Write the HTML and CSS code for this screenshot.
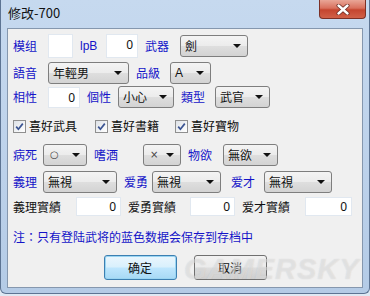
FILE: index.html
```html
<!DOCTYPE html>
<html lang="zh-TW">
<head>
    <meta charset="UTF-8">
    <title>修改-700</title>
    <link rel="stylesheet" href="styles.css">
</head>
<body>
    <div class="window">
        <div class="titlebar">
            <span class="title">修改-700</span>
            <div class="close-btn">
                <svg width="14" height="11" viewBox="0 0 14 11">
                    <path d="M2.5 1.5 L11.5 9.5 M11.5 1.5 L2.5 9.5" stroke="#6b2a22" stroke-width="4" stroke-linecap="round"/>
                    <path d="M2.5 1.5 L11.5 9.5 M11.5 1.5 L2.5 9.5" stroke="#fff" stroke-width="2.4" stroke-linecap="round"/>
                </svg>
            </div>
        </div>
        <div class="panel">
            <div class="row row-1">
                <span class="lbl">模组</span>
                <div class="edit"></div>
                <span class="lbl latin">lpB</span>
                <div class="edit">0</div>
                <span class="lbl">武器</span>
                <div class="combo"><span>劍</span><i class="arrow"></i></div>
            </div>
            <div class="row row-2">
                <span class="lbl">語音</span>
                <div class="combo"><span>年輕男</span><i class="arrow"></i></div>
                <span class="lbl">品級</span>
                <div class="combo"><span class="latin">A</span><i class="arrow"></i></div>
            </div>
            <div class="row row-3">
                <span class="lbl">相性</span>
                <div class="edit">0</div>
                <span class="lbl">個性</span>
                <div class="combo"><span>小心</span><i class="arrow"></i></div>
                <span class="lbl">類型</span>
                <div class="combo"><span>武官</span><i class="arrow"></i></div>
            </div>
            <div class="row row-4">
                <label class="check"><span class="box"><svg width="11" height="11" viewBox="0 0 11 11"><path d="M2.2 5.6 L4.4 8.2 L8.8 2.6" fill="none" stroke="#3b5492" stroke-width="1.7"/></svg></span>喜好武具</label>
                <label class="check"><span class="box"><svg width="11" height="11" viewBox="0 0 11 11"><path d="M2.2 5.6 L4.4 8.2 L8.8 2.6" fill="none" stroke="#3b5492" stroke-width="1.7"/></svg></span>喜好書籍</label>
                <label class="check"><span class="box"><svg width="11" height="11" viewBox="0 0 11 11"><path d="M2.2 5.6 L4.4 8.2 L8.8 2.6" fill="none" stroke="#3b5492" stroke-width="1.7"/></svg></span>喜好寶物</label>
            </div>
            <div class="row row-5">
                <span class="lbl">病死</span>
                <div class="combo"><span class="sym">○</span><i class="arrow"></i></div>
                <span class="lbl">嗜酒</span>
                <div class="combo"><span class="sym">×</span><i class="arrow"></i></div>
                <span class="lbl">物欲</span>
                <div class="combo"><span>無欲</span><i class="arrow"></i></div>
            </div>
            <div class="row row-6">
                <span class="lbl">義理</span>
                <div class="combo"><span>無視</span><i class="arrow"></i></div>
                <span class="lbl">爱勇</span>
                <div class="combo"><span>無視</span><i class="arrow"></i></div>
                <span class="lbl">爱才</span>
                <div class="combo"><span>無視</span><i class="arrow"></i></div>
            </div>
            <div class="row row-7">
                <span class="lbl black">義理實績</span>
                <div class="edit">0</div>
                <span class="lbl black">爱勇實績</span>
                <div class="edit">0</div>
                <span class="lbl black">爱才實績</span>
                <div class="edit">0</div>
            </div>
            <div class="note">注：只有登陆武将的蓝色数据会保存到存档中</div>
            <div class="buttons">
                <button class="btn default">确定</button>
                <button class="btn">取消</button>
            </div>
            <div class="watermark">GAMERSKY</div>
        </div>
    </div>
</body>
</html>
```

FILE: styles.css
```css
* {
    margin: 0;
    padding: 0;
    box-sizing: border-box;
}

body {
    width: 370px;
    height: 296px;
    overflow: hidden;
    background: #dfe9f4;
    font-family: "Noto Sans CJK TC", "Noto Sans", sans-serif;
    font-size: 12px;
}

.window {
    width: 370px;
    height: 294px;
    background: linear-gradient(180deg, #c6d9ef 0%, #bcd1ea 60%, #b4cbe6 100%);
    border: 1px solid #5d7493;
    border-top: none;
    border-radius: 0 0 6px 6px;
    padding: 0 6px;
}

.titlebar {
    height: 28px;
    display: flex;
    justify-content: space-between;
    align-items: flex-start;
}

.title {
    font-family: "Noto Sans CJK SC", sans-serif;
    font-size: 13px;
    color: #111;
    margin-top: 5px;
    margin-left: 1px;
    line-height: 16px;
}

.close-btn {
    width: 47px;
    height: 19px;
    margin-right: -3px;
    border: 1px solid #7c3026;
    border-top: none;
    border-radius: 0 0 4px 4px;
    background: linear-gradient(180deg, #e9a697 0%, #d9705d 45%, #c5452f 55%, #d06048 100%);
    display: flex;
    justify-content: center;
    align-items: center;
}

.panel {
    position: relative;
    height: 260px;
    background: #f0f0f0;
    border: 1px solid #8597ae;
    padding: 0 0 0 5px;
}

.row {
    display: grid;
    align-items: center;
    line-height: 14px;
}

.lbl {
    color: #1414c8;
    white-space: nowrap;
}

.lbl.black {
    color: #111;
}

.latin {
    font-family: "Liberation Sans", Arial, sans-serif;
}

.edit {
    width: calc(100% - 7px);
    height: 21px;
    background: #fff;
    border: 1px solid #e1e8f0;
    text-align: right;
    padding-right: 4px;
    line-height: 19px;
    font-family: "Noto Sans", sans-serif;
    color: #111;
}

.combo {
    width: calc(100% - 7px);
    height: 22px;
    border: 1px solid #7e7e7e;
    border-radius: 3px;
    background: linear-gradient(180deg, #f4f4f4 0%, #ececec 48%, #dedede 52%, #d3d3d3 100%);
    display: flex;
    justify-content: space-between;
    align-items: center;
    padding: 0 6px 0 4px;
    color: #111;
}

.combo .sym {
    font-family: "DejaVu Sans", sans-serif;
    font-size: 10px;
    color: #444;
    padding-left: 2px;
}

.arrow {
    width: 0;
    height: 0;
    border-left: 4px solid transparent;
    border-right: 4px solid transparent;
    border-top: 4px solid #111;
}

.row-1 {
    margin-top: 5px;
    height: 24px;
    grid-template-columns: 35px 32px 26px 39px 35px 75px;
}

.row-1 .edit {
    height: 24px;
}

.row-2 {
    margin-top: 4px;
    height: 22px;
    grid-template-columns: 35px 88px 34px 48px;
}

.row-3 {
    margin-top: 2px;
    height: 21px;
    grid-template-columns: 35px 39px 31px 63px 34px 62px;
}

.row-4 {
    margin-top: 12px;
    height: 14px;
    grid-template-columns: 82px 80px auto;
}

.row-5 {
    margin-top: 11px;
    height: 22px;
    grid-template-columns: 30px 51px 49px 45px 35px 62px;
}

.row-6 {
    margin-top: 5px;
    height: 22px;
    grid-template-columns: 30px 81px 28px 79px 33px 75px;
}

.row-6 .combo:nth-of-type(2) {
    width: calc(100% - 10px);
}

.row-7 {
    margin-top: 4px;
    height: 19px;
    grid-template-columns: 63px 52px 62px 52px 63px 54px;
}

.row-7 .edit {
    height: 19px;
    line-height: 17px;
}

.check {
    display: flex;
    align-items: center;
    gap: 3px;
    color: #111;
}

.box {
    width: 13px;
    height: 13px;
    border: 1px solid #8f8f8f;
    background: linear-gradient(135deg, #dde1e6 0%, #f6f7f8 70%, #ffffff 100%);
    display: flex;
    justify-content: center;
    align-items: center;
}

.note {
    margin-top: 14px;
    height: 14px;
    line-height: 14px;
    color: #1414c8;
    font-family: "Noto Sans CJK SC", sans-serif;
}

.buttons {
    margin-top: 11px;
    display: flex;
    justify-content: center;
    gap: 17px;
    padding-right: 5px;
}

.btn {
    width: 73px;
    height: 25px;
    border: 1px solid #707070;
    border-radius: 3px;
    background: linear-gradient(180deg, #f2f2f2 0%, #ebebeb 48%, #dddddd 52%, #cfcfcf 100%);
    font-family: "Noto Sans CJK SC", sans-serif;
    font-size: 12px;
    color: #111;
}

.btn.default {
    border-color: #3c7fb1;
    box-shadow: inset 0 0 0 1px #9ad5f2;
    background: linear-gradient(180deg, #eaf6fd 0%, #d9f0fc 48%, #bee6fd 52%, #a7d9f5 100%);
}

.watermark {
    position: absolute;
    left: 176px;
    top: 224px;
    font-family: "Liberation Sans", Arial, sans-serif;
    font-size: 29px;
    font-weight: bold;
    font-style: italic;
    letter-spacing: 1px;
    color: rgba(255, 255, 255, 0.35);
    text-shadow: 0 0 1px rgba(150, 150, 150, 0.35);
    pointer-events: none;
}
```
